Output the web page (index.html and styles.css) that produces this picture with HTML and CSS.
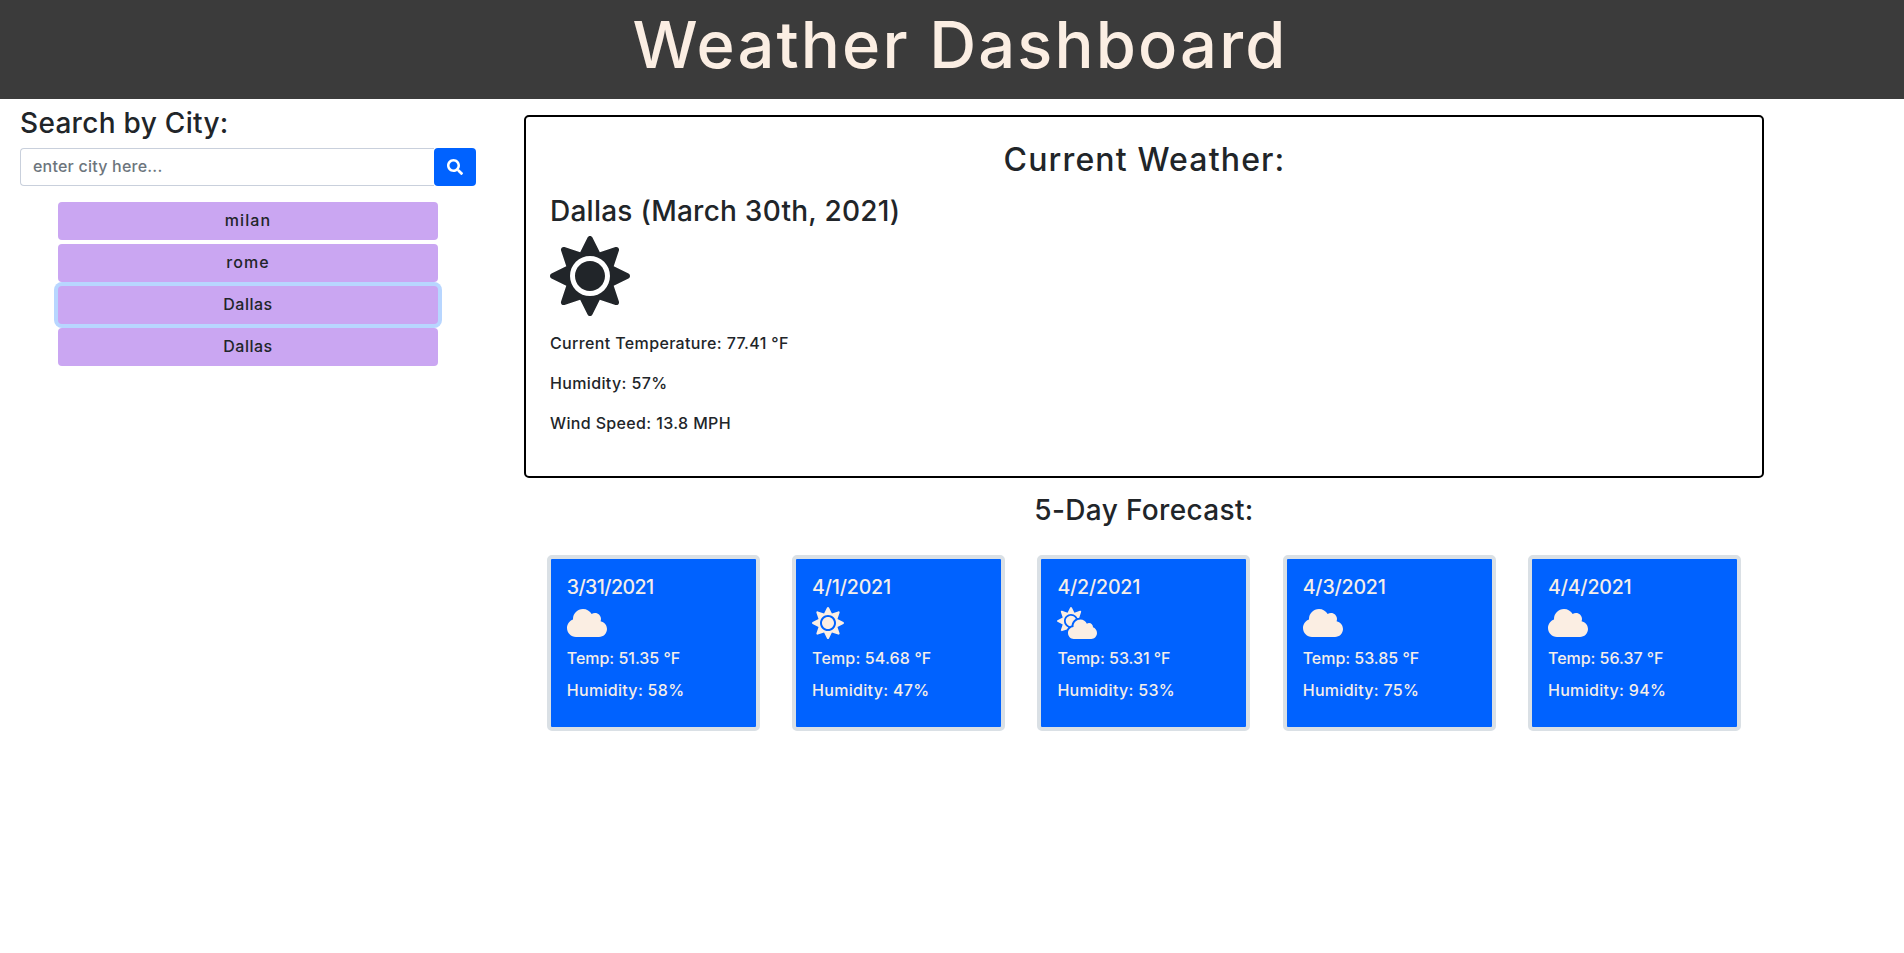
FILE: index.html
```html
<!DOCTYPE html>
<html lang="en">
<head>
<meta charset="utf-8">
<title>Weather Dashboard</title>
<link rel="stylesheet" href="styles.css">
</head>
<body>
<svg class="sprite" aria-hidden="true">
  <symbol id="sun" viewBox="0 0 512 512"><path d="M256 160c-52.9 0-96 43.1-96 96s43.1 96 96 96 96-43.1 96-96-43.1-96-96-96zm246.4 80.5l-94.7-47.3 33.5-100.4c4.5-13.6-8.4-26.5-21.9-21.9l-100.4 33.5-47.4-94.8c-6.4-12.8-24.6-12.8-31 0l-47.3 94.7L92.7 70.8c-13.6-4.5-26.5 8.4-21.9 21.9l33.5 100.4-94.7 47.4c-12.8 6.4-12.8 24.6 0 31l94.7 47.3-33.5 100.5c-4.5 13.6 8.4 26.5 21.9 21.9l100.4-33.5 47.3 94.7c6.4 12.8 24.6 12.8 31 0l47.3-94.7 100.4 33.5c13.6 4.5 26.5-8.4 21.9-21.9l-33.5-100.4 94.7-47.3c13-6.5 13-24.7.2-31.1zm-155.9 106c-49.9 49.9-131.1 49.9-181 0-49.9-49.9-49.9-131.1 0-181 49.9-49.9 131.1-49.9 181 0 49.9 49.9 49.9 131.1 0 181z"/></symbol>
  <symbol id="cloud" viewBox="0 0 640 512"><path d="M537.6 226.6c4.1-10.7 6.4-22.4 6.4-34.6 0-53-43-96-96-96-19.7 0-38.1 6-53.3 16.2C367 64.2 315.3 32 256 32c-88.4 0-160 71.6-160 160 0 2.7.1 5.4.2 8.1C40.2 219.8 0 273.2 0 336c0 79.5 64.5 144 144 144h368c70.7 0 128-57.3 128-128 0-61.9-44-113.6-102.4-125.4z"/></symbol>
  <symbol id="cloud-sun" viewBox="0 0 640 512"><path d="M575.2 325.7c.2-1.9.8-3.7.8-5.6 0-35.3-28.7-64-64-64-12.6 0-24.2 3.8-34.1 10-17.6-38.8-56.5-66-101.9-66-61.8 0-112 50.1-112 112 0 3 .7 5.8.9 8.7-49.6 3.7-88.9 44.7-88.9 95.3 0 53 43 96 96 96h272c53 0 96-43 96-96 0-42.1-27.2-77.4-64.8-90.4zm-430.4-22.6c-43.7-43.7-43.7-114.7 0-158.3 43.7-43.7 114.7-43.7 158.4 0 9.7 9.7 16.9 20.9 22.3 32.7 9.8-3.7 20.1-6 30.7-7.5L386 81.1c4-11.9-7.3-23.1-19.2-19.2L279 91.2 237.5 8.4C232-2.8 216-2.8 210.4 8.4L169 91.2 81.1 61.9C69.3 58 58 69.3 61.9 81.1l29.3 87.8-82.8 41.5c-11.2 5.6-11.2 21.5 0 27.1l82.8 41.4-29.3 87.8c-4 11.9 7.3 23.1 19.2 19.2l76.1-25.3c6.1-12.4 14-23.7 23.6-33.5-13.1-5.4-25.4-13.4-36-24zm-4.8-79.2c0 40.8 29.3 74.8 67.9 82.3 8-4.7 16.3-8.8 25.2-11.7 5.4-44.3 31-82.5 67.4-105C287.3 160.4 258 140 224 140c-46.3 0-84 37.6-84 83.9z"/></symbol>
  <symbol id="search" viewBox="0 0 512 512"><path d="M505 442.7L405.3 343c-4.5-4.5-10.6-7-17-7H372c27.6-35.3 44-79.7 44-128C416 93.1 322.9 0 208 0S0 93.1 0 208s93.1 208 208 208c48.3 0 92.7-16.4 128-44v16.3c0 6.4 2.5 12.5 7 17l99.7 99.7c9.4 9.4 24.6 9.4 33.9 0l28.3-28.3c9.4-9.4 9.4-24.6.1-34zM208 336c-70.7 0-128-57.2-128-128 0-70.7 57.2-128 128-128 70.7 0 128 57.2 128 128 0 70.7-57.2 128-128 128z"/></symbol>
</svg>

<header class="header"><h1 class="title">Weather Dashboard</h1></header>

<div class="layout">
  <aside class="sidebar">
    <h3 class="heading heading-search">Search by City:</h3>
    <form class="search">
      <input class="search-input" type="text" placeholder="enter city here...">
      <button class="search-button" type="button" aria-label="Search"><svg class="search-icon"><use href="#search"/></svg></button>
    </form>
    <div class="history">
      <button class="city city-wide">milan</button>
      <button class="city city-wide">rome</button>
      <button class="city city-active">Dallas</button>
      <button class="city">Dallas</button>
    </div>
  </aside>

  <main class="main">
    <section class="current">
      <h2 class="current-title">Current Weather:</h2>
      <h3 class="heading heading-date">Dallas (March 30th, 2021)</h3>
      <svg class="current-icon"><use href="#sun"/></svg>
      <p class="reading">Current Temperature: 77.41 °F</p>
      <p class="reading">Humidity: 57%</p>
      <p class="reading">Wind Speed: 13.8 MPH</p>
    </section>
    <h3 class="heading forecast-title">5-Day Forecast:</h3>
    <section class="forecast">
      <article class="card">
        <h5 class="date date-tight">3/31/2021</h5>
        <svg class="icon"><use href="#cloud"/></svg>
        <p class="temp">Temp: 51.35 °F</p>
        <p class="humidity">Humidity: 58%</p>
      </article>
      <article class="card">
        <h5 class="date">4/1/2021</h5>
        <svg class="icon icon-sun"><use href="#sun"/></svg>
        <p class="temp temp-wide">Temp: 54.68 °F</p>
        <p class="humidity">Humidity: 47%</p>
      </article>
      <article class="card">
        <h5 class="date">4/2/2021</h5>
        <svg class="icon"><use href="#cloud-sun"/></svg>
        <p class="temp">Temp: 53.31 °F</p>
        <p class="humidity">Humidity: 53%</p>
      </article>
      <article class="card">
        <h5 class="date">4/3/2021</h5>
        <svg class="icon"><use href="#cloud"/></svg>
        <p class="temp">Temp: 53.85 °F</p>
        <p class="humidity">Humidity: 75%</p>
      </article>
      <article class="card">
        <h5 class="date">4/4/2021</h5>
        <svg class="icon"><use href="#cloud"/></svg>
        <p class="temp">Temp: 56.37 °F</p>
        <p class="humidity">Humidity: 94%</p>
      </article>
    </section>
  </main>
</div>
</body>
</html>
```
FILE: styles.css
```css
* { box-sizing: border-box; }

body {
  margin: 0;
  font-family: Inter, "Open Sans", sans-serif;
  font-size: 16px;
  font-weight: 500;
  line-height: 24px;
  letter-spacing: .36px;
  color: #212529;
  background: #fff;
}

h1, h2, h3, h5, p { margin: 0; font-weight: 500; }
svg { display: block; fill: currentColor; }
.sprite { position: absolute; width: 0; height: 0; }

.header {
  height: 99px;
  padding: 7px 0 0 16px;
  background: #3b3b3b;
  color: #fbeee3;
  text-align: center;
}
.title { font-size: 65px; font-weight: 550; line-height: 76.8px; letter-spacing: 2.15px; }

.layout { display: flex; }
.sidebar { width: 496px; padding: 8px 20px 0; }
.heading { font-size: 28px; line-height: 33.6px; letter-spacing: .35px; margin-bottom: 8px; }
.heading-search { margin-bottom: 7.4px; letter-spacing: .3px; }

.search { display: flex; width: 456px; height: 38px; margin-bottom: 16px; }
.search-input {
  flex: 1;
  min-width: 0;
  padding: 5px 12px 7px;
  border: 1px solid #c9d0dc;
  border-right: 0;
  border-radius: 4px 0 0 4px;
  font: inherit;
  letter-spacing: .22px;
}
.search-input::placeholder { color: #6c757d; opacity: 1; }
.search-button {
  width: 42px;
  padding: 10px 13px;
  border: 0;
  border-radius: 4px;
  color: #fff;
  background: #0062ff;
}
.search-icon { width: 16px; height: 16px; }

.history { display: flex; flex-direction: column; gap: 4px; width: 380px; margin-left: 38px; }
.city {
  height: 38px;
  padding: 0 0 2px;
  border: 0;
  border-radius: 4px;
  font: inherit;
  letter-spacing: .5px;
  color: #212529;
  background: #caa6f2;
}
.city-wide { letter-spacing: 1.1px; }
.city-active { box-shadow: 0 0 0 4px #b8d6ff; }

.main { width: 1296px; padding: 16px 28px 0; }
.current {
  height: 363px;
  padding: 24px;
  border: 2px solid #000;
  border-radius: 5px;
}
.current-title {
  margin-bottom: 15.3px;
  padding-left: 1px;
  text-align: center;
  font-size: 32px;
  line-height: 38.4px;
  letter-spacing: 1.15px;
}
.heading-date { margin-bottom: 7.3px; letter-spacing: .25px; }
.current-icon { width: 80px; height: 80px; margin-bottom: 15px; }
.reading { margin-bottom: 16px; }

.forecast-title { margin-top: 16px; margin-bottom: 27.4px; text-align: center; }
.forecast { display: grid; grid-template-columns: repeat(5, 213px); column-gap: 32.3px; padding-left: 22.8px; }
.card {
  height: 176px;
  padding: 16px;
  border: 4px solid #dae0e5;
  border-radius: 5px;
  color: #f5eee9;
  background: #0062ff;
}
.date { margin-bottom: 8px; font-size: 19.6px; line-height: 24px; letter-spacing: -.2px; }
.date-tight { letter-spacing: -.6px; }
.icon { width: 40px; height: 32px; margin-bottom: 7px; color: #fbeee3; }
.icon-sun { width: 32px; }
.temp { margin-bottom: 8px; letter-spacing: -.03px; }
.temp-wide { letter-spacing: .15px; }
.humidity { letter-spacing: .3px; }
```
